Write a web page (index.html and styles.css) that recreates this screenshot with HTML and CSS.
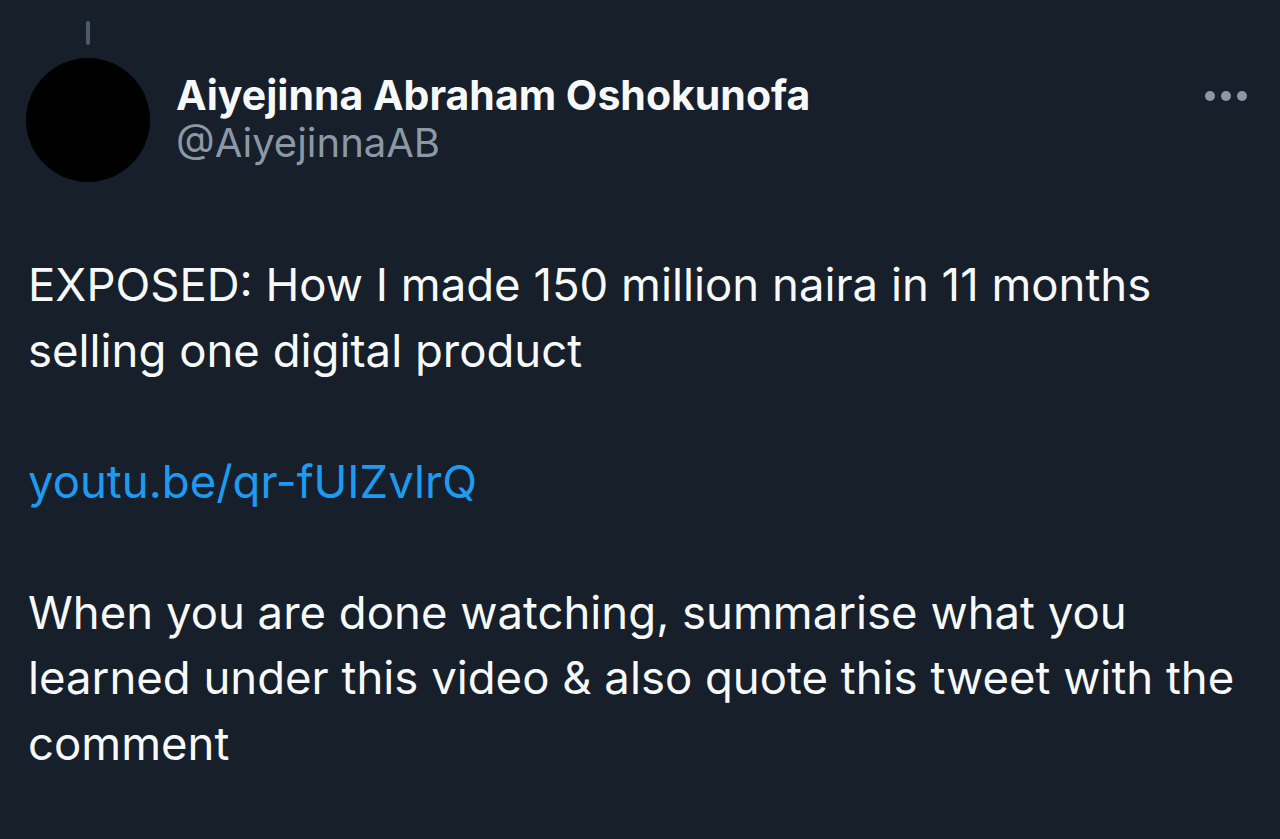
FILE: index.html
```html
<!DOCTYPE html>
<html lang="en">
<head>
<meta charset="utf-8">
<title>Tweet</title>
<link rel="stylesheet" href="styles.css">
</head>
<body>
<main class="tweet">
  <div class="thread-top">
    <div class="thread-line"></div>
  </div>
  <header class="tweet-header">
    <div class="avatar"></div>
    <div class="names">
      <div class="name">Aiyejinna Abraham Oshokunofa</div>
      <div class="handle">@AiyejinnaAB</div>
    </div>
    <div class="more" aria-label="More">
      <span class="dot"></span><span class="dot"></span><span class="dot"></span>
    </div>
  </header>
  <div class="tweet-text">
    <p>EXPOSED: How I made 150 million naira in 11 months<br>selling one digital product</p>
    <p><a class="link" href="#">youtu.be/qr-fUIZvlrQ</a></p>
    <p>When you are done watching, summarise what you<br>learned under this video &amp; also quote this tweet with the<br>comment</p>
  </div>
</main>
</body>
</html>
```
FILE: styles.css
```css
html, body {
  margin: 0;
  padding: 0;
  background: #161f2a;
  height: 100%;
  overflow: hidden;
}
body {
  font-family: Inter, "Liberation Sans", Arial, sans-serif;
  color: #f7f9f9;
}
.tweet {
  padding: 0 28px 0 26px;
}
.thread-top {
  width: 124px;
  height: 58px;
  display: flex;
  justify-content: center;
  align-items: flex-start;
}
.thread-line {
  margin-top: 21px;
  width: 4px;
  height: 24px;
  border-radius: 2px;
  background: #4e5a69;
}
.tweet-header {
  display: flex;
  align-items: flex-start;
}
.avatar {
  width: 124px;
  height: 124px;
  border-radius: 50%;
  background: #000;
  flex: none;
}
.names {
  margin-left: 26px;
  padding-top: 13px;
  flex: 1;
}
.name {
  font-weight: 700;
  font-size: 41px;
  line-height: 48px;
  color: #f7f9f9;
}
.handle {
  margin-top: 4px;
  font-size: 40px;
  line-height: 40px;
  color: #8b98a5;
}
.more {
  display: flex;
  gap: 6px;
  padding-top: 33px;
  margin-right: 5px;
}
.dot {
  width: 10px;
  height: 10px;
  border-radius: 50%;
  background: #8b98a5;
}
.tweet-text {
  margin-top: 70px;
  padding-left: 2px;
  font-size: 45.5px;
  line-height: 65.5px;
  white-space: nowrap;
}
.tweet-text p {
  margin: 0 0 65.5px 0;
}
.link {
  color: #1d9bf0;
  text-decoration: none;
}
```
